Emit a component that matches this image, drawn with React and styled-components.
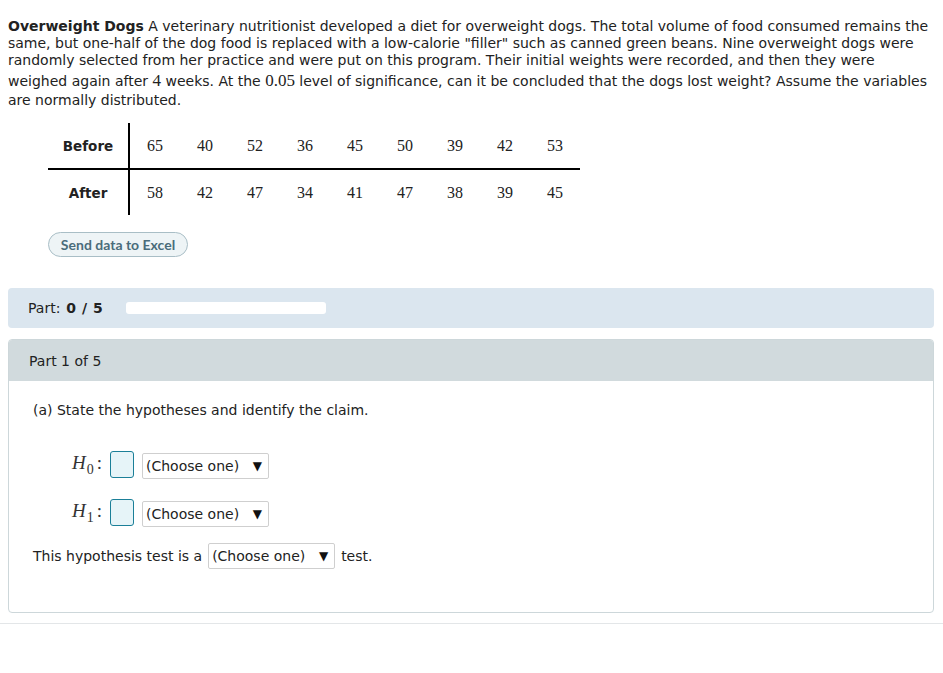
import React from "react";
import styled, { createGlobalStyle } from "styled-components";

const Global = createGlobalStyle`
  html, body { margin: 0; padding: 0; background: #fff; }
  body { font-family: "DejaVu Sans", Verdana, sans-serif; color: #222; }
`;

const Page = styled.div`
  padding: 18px 9px 0 8px;
`;

const Problem = styled.p`
  margin: 0;
  font-size: 14px;
  line-height: 17px;
`;

const Title = styled.b`
  font-weight: bold;
`;

const MathNum = styled.span`
  font-family: "Liberation Serif", "Times New Roman", serif;
  font-size: 17px;
  display: inline-block;
  padding: 3px 0;
  line-height: 17px;
`;

const DataTable = styled.div`
  margin: 14px 0 0 40px;
  display: grid;
  grid-template-columns: 82px repeat(9, 50px);
  width: max-content;
`;

const Label = styled.div`
  height: 45px;
  display: flex;
  align-items: center;
  justify-content: center;
  font-size: 13.5px;
  font-weight: bold;
  border-right: 2px solid #000;
  ${(p) => p.$top && "border-bottom: 2px solid #000;"}
`;

const Cell = styled.div`
  height: 45px;
  display: flex;
  align-items: center;
  justify-content: center;
  font-family: "Liberation Serif", "Times New Roman", serif;
  font-size: 16px;
  ${(p) => p.$top && "border-bottom: 2px solid #000;"}
`;

const ExcelButton = styled.button`
  margin: 17px 0 0 40px;
  height: 25px;
  width: 140px;
  padding: 0;
  border: 1px solid #a9bec6;
  border-radius: 13px;
  background: #eef4f6;
  color: #4a6c7b;
  font-family: Lato, "Open Sans", sans-serif;
  font-weight: 700;
  font-size: 14px;
  display: block;
`;

const PartBar = styled.div`
  margin-top: 31px;
  height: 40px;
  background: #dbe6ef;
  border-radius: 4px;
  display: flex;
  align-items: center;
  padding-left: 20px;
  font-size: 14px;
`;

const PartCount = styled.b`
  margin-left: 6px;
  font-weight: bold;
  letter-spacing: 0.5px;
`;

const Progress = styled.div`
  margin-left: 23px;
  width: 200px;
  height: 12px;
  background: #fff;
  border-radius: 3px;
`;

const Card = styled.div`
  margin-top: 11px;
  border: 1px solid #cdd7da;
  border-radius: 4px;
  overflow: hidden;
  height: 274px;
  box-sizing: border-box;
`;

const CardHeader = styled.div`
  height: 41px;
  background: #d1dadd;
  display: flex;
  align-items: center;
  padding-left: 20px;
  font-size: 14px;
`;

const CardBody = styled.div`
  padding: 21px 24px 0 24px;
  font-size: 14px;
`;

const Question = styled.div`
  line-height: 17px;
`;

const HypRow = styled.div`
  display: flex;
  align-items: center;
  margin-left: 39px;
  margin-top: ${(p) => p.$mt}px;
  height: 28px;
`;

const HLabel = styled.span`
  font-family: "Liberation Serif", "Times New Roman", serif;
  font-size: 19px;
  width: 38px;
  display: inline-block;
  white-space: nowrap;
  color: #333;
  line-height: 28px;
`;

const HItalic = styled.i`
  font-style: italic;
`;

const HSub = styled.span`
  font-size: 14px;
  position: relative;
  top: 5px;
  margin-left: 1px;
`;

const HColon = styled.span`
  margin-left: 3px;
`;

const AnswerBox = styled.div`
  width: 24px;
  height: 27px;
  box-sizing: border-box;
  border: 1px solid #1b7f98;
  border-radius: 3px;
  background: #e6f4f8;
`;

const Select = styled.div`
  margin-left: ${(p) => p.$ml}px;
  margin-top: ${(p) => p.$mt || 0}px;
  width: 127px;
  height: 26px;
  box-sizing: border-box;
  border: 1px solid #cfcfcf;
  border-radius: 2px;
  background: #fff;
  display: flex;
  align-items: center;
  justify-content: space-between;
  padding: 0 6px 0 3px;
  font-size: 14px;
  color: #222;
`;

const Arrow = styled.span`
  font-size: 12px;
  color: #111;
`;

const TestRow = styled.div`
  display: flex;
  align-items: center;
  margin-top: 17px;
  height: 26px;
`;

const After = styled.span`
  margin-left: 6px;
`;

const Rule = styled.div`
  margin-top: 10px;
  height: 1px;
  background: #e3e6e8;
`;

const before = [65, 40, 52, 36, 45, 50, 39, 42, 53];
const after = [58, 42, 47, 34, 41, 47, 38, 39, 45];

function ChooseOne({ ml, mt }) {
  return (
    <Select $ml={ml} $mt={mt}>
      <span>(Choose one)</span>
      <Arrow>▼</Arrow>
    </Select>
  );
}

function Hyp({ sub, mt }) {
  return (
    <HypRow $mt={mt}>
      <HLabel>
        <HItalic>H</HItalic>
        <HSub>{sub}</HSub>
        <HColon>:</HColon>
      </HLabel>
      <AnswerBox />
      <ChooseOne ml={8} mt={4} />
    </HypRow>
  );
}

export default function App() {
  return (
    <>
      <Global />
      <Page>
        <Problem>
          <Title>Overweight Dogs</Title> A veterinary nutritionist developed a
          diet for overweight dogs. The total volume of food consumed remains
          the same, but one-half of the dog food is replaced with a low-calorie
          "filler" such as canned green beans. Nine overweight dogs were
          randomly selected from her practice and were put on this program.
          Their initial weights were recorded, and then they were weighed again
          after <MathNum>4</MathNum> weeks. At the <MathNum>0.05</MathNum> level
          of significance, can it be concluded that the dogs lost weight? Assume
          the variables are normally distributed.
        </Problem>
        <DataTable>
          <Label $top>Before</Label>
          {before.map((v, i) => (
            <Cell key={"b" + i} $top>
              {v}
            </Cell>
          ))}
          <Label>After</Label>
          {after.map((v, i) => (
            <Cell key={"a" + i}>{v}</Cell>
          ))}
        </DataTable>
        <ExcelButton>Send data to Excel</ExcelButton>
        <PartBar>
          Part:<PartCount>0 / 5</PartCount>
          <Progress />
        </PartBar>
        <Card>
          <CardHeader>Part 1 of 5</CardHeader>
          <CardBody>
            <Question>(a) State the hypotheses and identify the claim.</Question>
            <Hyp sub="0" mt={31} />
            <Hyp sub="1" mt={20} />
            <TestRow>
              This hypothesis test is a
              <ChooseOne ml={6} />
              <After>test.</After>
            </TestRow>
          </CardBody>
        </Card>
      </Page>
      <Rule />
    </>
  );
}
